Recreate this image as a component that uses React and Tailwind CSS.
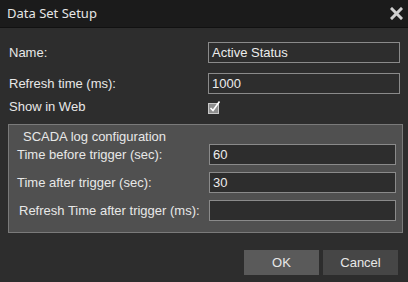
// Data Set Setup dialog

function Field({ value, width = 'w-[193px]' }) {
  return (
    <div className={`${width} h-[21px] border border-[#8a8a8a] bg-[#2d2d2d] flex items-center pl-[3px] text-[13px] text-[#ececec]`}>
      {value}
    </div>
  );
}

function CheckIcon() {
  return (
    <svg width="14" height="14" viewBox="0 0 14 14">
      <rect x="0.5" y="3.5" width="10" height="10" fill="#8e8e8e" stroke="#c8c8c8" />
      <path d="M2.5 8 L5 10.5 L11.5 1.5" fill="none" stroke="#ffffff" strokeWidth="1.6" />
    </svg>
  );
}

export default function App() {
  const group = [
    { label: 'Time before trigger (sec):', value: '60', pad: 'pl-[8px]' },
    { label: 'Time after trigger (sec):', value: '30', pad: 'pl-[8px]' },
    { label: 'Refresh Time after trigger (ms):', value: '', pad: 'pl-[10px]' },
  ];

  return (
    <div className="w-[408px] h-[282px] bg-[#2d2d2d] flex flex-col font-['Liberation_Sans',Arial,sans-serif] text-[13px] text-[#e8e8e8]">
      {/* title bar */}
      <div className="h-[28px] bg-[#1b1b1b] border-b border-[#111] flex items-center justify-between pl-[7px] pr-[4px]">
        <span className="font-['Noto_Sans',sans-serif] text-[13px] text-[#e6e6e6]">Data Set Setup</span>
        <svg width="13" height="13" viewBox="0 0 13 13" className="mr-[1px]">
          <path d="M2 2 L11 11 M11 2 L2 11" stroke="#cfcfcf" strokeWidth="3" strokeLinecap="square" />
        </svg>
      </div>

      <div className="px-[8px] pt-[14px] flex flex-col">
        <div className="flex items-center">
          <span className="w-[201px] pl-[1px]">Name:</span>
          <Field value="Active Status" />
        </div>
        <div className="flex items-center mt-[10px]">
          <span className="w-[201px] pl-[1px]">Refresh time (ms):</span>
          <Field value="1000" />
        </div>
        <div className="flex items-center h-[12px] mt-[7px]">
          <span className="w-[200px] pl-[1px]">Show in Web</span>
          <CheckIcon />
        </div>

        {/* SCADA group */}
        <div className="mt-[11px] w-[395px] border border-[#7a7a7a] bg-[#505050] pt-[4px] pb-[11px] flex flex-col">
          <span className="pl-[14px] leading-[15px]">SCADA log configuration</span>
          <div className="flex flex-col gap-[7px]">
            {group.map((row) => (
              <div key={row.label} className={`flex items-center ${row.pad}`}>
                <span className={row.pad === 'pl-[10px]' ? 'w-[190px]' : 'w-[192px]'}>{row.label}</span>
                <Field value={row.value} width="w-[187px]" />
              </div>
            ))}
          </div>
        </div>

        {/* buttons */}
        <div className="flex justify-end gap-[4px] mt-[17px] pr-[2px]">
          <button className="w-[75px] h-[25px] bg-[#5a5a5a] text-[#e8e8e8]">OK</button>
          <button className="w-[75px] h-[25px] bg-[#464646] text-[#e8e8e8]">Cancel</button>
        </div>
      </div>
    </div>
  );
}
